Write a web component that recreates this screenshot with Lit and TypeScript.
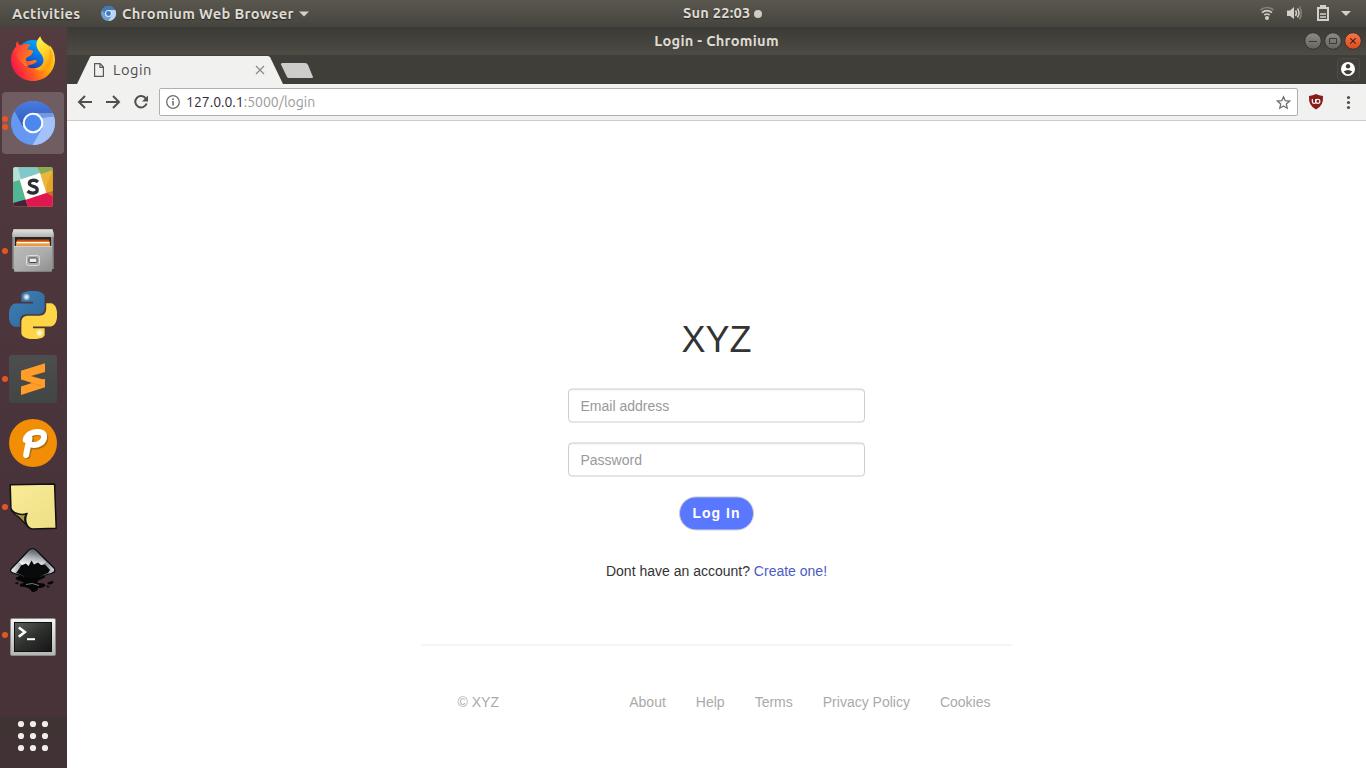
import { LitElement, html, svg, css } from "lit";
import { customElement, property } from "lit/decorators.js";

const PY =
  "M14.25.18l.9.2.73.26.59.3.45.32.34.34.25.34.16.33.1.3.04.26.02.2-.01.13V8.5l-.05.63-.13.55-.21.46-.26.38-.3.31-.33.25-.35.19-.35.14-.33.1-.3.07-.26.04-.21.02H8.77l-.69.05-.59.14-.5.22-.41.27-.33.32-.27.35-.2.36-.15.37-.1.35-.07.32-.04.27-.02.21v3.06H3.17l-.21-.03-.28-.07-.32-.12-.35-.18-.36-.26-.36-.36-.35-.46-.32-.59-.28-.73-.21-.88-.14-1.05-.05-1.23.06-1.22.16-1.04.24-.87.32-.71.36-.57.4-.44.42-.33.42-.24.4-.16.36-.1.32-.05.24-.01h.16l.06.01h8.16v-.83H6.18l-.01-2.75-.02-.37.05-.34.11-.31.17-.28.25-.26.31-.23.38-.2.44-.18.51-.15.58-.12.64-.1.71-.06.77-.04.84-.02 1.27.05z";

const firefox = svg`
  <defs>
    <linearGradient id="fb" x1=".75" y1="0" x2=".3" y2="1"><stop offset="0" stop-color="#00b0ff"/><stop offset=".5" stop-color="#0a6fe0"/><stop offset="1" stop-color="#2b1f86"/></linearGradient>
    <linearGradient id="fo" x1="1" y1=".25" x2="0" y2=".65"><stop offset="0" stop-color="#ffd72a"/><stop offset=".3" stop-color="#ffa50a"/><stop offset=".62" stop-color="#ff5a22"/><stop offset="1" stop-color="#f8104e"/></linearGradient>
    <linearGradient id="fy" x1=".2" y1="0" x2=".6" y2="1"><stop offset="0" stop-color="#fff64e"/><stop offset=".5" stop-color="#ffd52b"/><stop offset="1" stop-color="#ff9a0a"/></linearGradient>
    <linearGradient id="fp" x1="0" y1="0" x2="1" y2=".6"><stop offset="0" stop-color="#ff2f40"/><stop offset="1" stop-color="#ff8a16"/></linearGradient>
  </defs>
  <circle cx="24" cy="21.500" r="16.500" fill="url(#fb)"/>
  <path fill="url(#fo)" d="M8.300 6.300C6.800 8.500 7 10.500 7.100 11.500C3.500 15 2 20 2 25C2.400 37 12 46 24 46C36.500 46 45.500 36.500 46 25C46 18 43.500 13 40.500 10C42 15 41 21 37 24.500C36 29.500 31 33.300 25 33.300C20 33.300 16.500 31.500 14.500 29C17 30.500 21 30.500 24 29C27 27.500 28.500 26.500 27.500 25.500C24.500 24 22 26.500 19.500 26.300C16 26 16.500 23 18.500 22C20.500 21 22.500 20.500 22.500 19C22.500 17.500 18.500 18 18 15.500C17.800 13.500 19.500 11.500 21.500 10C17 9 13.500 10.500 12 10.800C9.500 10 8.500 8 8.300 6.300Z"/>
  <path fill="url(#fp)" d="M8.300 6.300C9 9 10 10.300 12 10.500C15 8.500 18.500 8.800 21.500 10.100C19 11.500 18 13.500 18.300 14.800C21 14.500 24 15.300 24.200 16.300C23.500 19.500 19.500 20.500 18.300 22C15 24 16 30 20 31C17 32.500 15 30.500 14.500 29C8 25 6 17 7.100 11.500Z"/>
  <path fill="url(#fy)" d="M31.300 1.200C27.500 5 26.700 9 28.200 13C29.500 17 34 19.500 34.500 25C34.600 29.500 30.500 33 25.500 33.500C32 38 41 33 43 27C45.500 20 43.500 14 39.500 10.500C36.500 8 32.500 6.500 31.300 1.200Z"/>
  <path fill="none" stroke="#ff9d12" stroke-width="2" opacity=".55" d="M41 15C43 25 39 34 30 37"/>`;

const chromium = svg`
  <defs><linearGradient id="cg" x1="0" y1="0" x2="0" y2="1"><stop offset="0" stop-color="#4a7be0"/><stop offset="1" stop-color="#2d5bbf"/></linearGradient></defs>
  <circle cx="24" cy="24" r="22" fill="#6598f2"/>
  <path fill="url(#cg)" d="M5.500 12A22 22 0 0 1 42.500 12.300L43.600 14H24L13.500 27Z"/>
  <path fill="#a3c2fa" d="M24 14H43.600A22 22 0 0 1 23.500 46L33.500 29Z"/>
  <path fill="#7398dc" d="M29 14H43.600L44.800 17.500L33 19Z"/>
  <circle cx="24" cy="24" r="10.300" fill="#fff"/><circle cx="24" cy="24" r="8.300" fill="#4a88f0"/>`;

const slack = svg`
  <clipPath id="sc"><rect x="4.300" y="4.300" width="39.400" height="39.200" rx="1.500"/></clipPath>
  <g clip-path="url(#sc)">
    <rect x="4" y="4" width="40" height="40" fill="#ecb53c"/>
    <path fill="#7fc9c8" d="M4 4H28L31 10L11 17L4 19Z"/>
    <path fill="#86ad56" d="M28 4H44V7L32 11Z"/>
    <path fill="#b5e0d8" d="M4 4H9L12 16.500L4 19Z"/>
    <path fill="#50b795" d="M4 19L11 17L16.500 37L4 41Z"/>
    <path fill="#45203f" d="M4 40L16.500 36.500L19 44H4Z"/>
    <path fill="#df1650" d="M16.500 36.500L37 29.500L44 28V44H19Z"/>
    <path fill="#cf6a31" d="M37 29.500L44 28V34Z"/>
    <path fill="#e4a626" d="M38 21L44 7V28L37 30Z"/>
    <path fill="#fff" d="M10.700 16.700L31 10L37.300 30L16.800 36.700Z"/>
    <path fill="none" stroke="#2b2f33" stroke-width="3.300" d="M29 19C26 16.300 20.300 16.800 20.400 20.500C20.600 24.300 28.200 22.500 28.200 26.700C28.200 31 21.500 30.800 18.600 28"/>
  </g>`;

const files = svg`
  <defs><linearGradient id="ff" x1="0" y1="0" x2="1" y2="1"><stop offset="0" stop-color="#bababa"/><stop offset=".5" stop-color="#adadad"/><stop offset="1" stop-color="#8e8e8e"/></linearGradient><linearGradient id="ft" x1="0" y1="0" x2="0" y2="1"><stop offset="0" stop-color="#e4e4e4"/><stop offset="1" stop-color="#b2b2b2"/></linearGradient></defs>
  <path fill="#8f8f8f" d="M4.500 2.500H43.500L44.700 7V42H3.300V7Z"/>
  <path fill="url(#ft)" d="M4.500 2.200H43.500L44.700 6.500V10H3.300V6.500Z"/>
  <rect x="6" y="10" width="36" height="9.500" fill="#262626"/>
  <path fill="#c44d16" d="M8 12.500H40V20H7Z"/><path fill="#ef9a3f" d="M7 14.500H41V20H7Z"/><path fill="#fff" d="M8 15H40V16.300H8Z"/>
  <rect x="5" y="19.300" width="38" height="25.500" rx="1" fill="url(#ff)"/><path stroke="#d0d0d0" d="M5 19.500H43"/>
  <rect x="17.500" y="28.500" width="13" height="10" rx="2" fill="#adadad" stroke="#ddd"/>
  <rect x="20" y="31" width="8" height="4.500" rx="1" fill="#eee" stroke="#444"/>`;

const python = svg`
  <defs><linearGradient id="pb" x1="0" y1="0" x2="1" y2="1"><stop offset="0" stop-color="#3d80b8"/><stop offset="1" stop-color="#2f6797"/></linearGradient><radialGradient id="gl"><stop offset="0" stop-color="#fff"/><stop offset=".35" stop-color="#fff" stop-opacity=".75"/><stop offset="1" stop-color="#fff" stop-opacity="0"/></radialGradient></defs>
  <path transform="scale(2)" fill="url(#pb)" d=${PY}/>
  <path transform="rotate(180 24 24) scale(2)" fill="#fed645" d=${PY}/>
  <circle cx="17.500" cy="6" r="4" fill="url(#gl)"/><circle cx="30.500" cy="42" r="4" fill="url(#gl)"/>`;

const sublime = svg`
  <defs><linearGradient id="su" x1="0" y1="0" x2="0" y2="1"><stop offset="0" stop-color="#4d4d4d"/><stop offset="1" stop-color="#424645"/></linearGradient></defs>
  <rect width="48" height="48" rx="3" fill="url(#su)"/>
  <path fill="#ff9d28" d="M12 31.500L36 23.800V32.300L12 40Z"/>
  <path fill="#e98a17" d="M16 25.500L36 24V30L31 31Z"/>
  <path fill="#ff9d28" d="M12 15.800L36 8.200V17L22 21L36 25V31.500L12 24.500Z"/>`;

const pinta = svg`
  <circle cx="24" cy="24" r="24" fill="#f28e05"/>
  <g fill="none" stroke-linecap="round" stroke-linejoin="round">
    <path stroke="#7c5a1a" stroke-width="6" opacity=".6" d="M18 22.500C18.500 16 26 13 32 14.500C39 17 37 24.500 29.500 27C26 28 23.500 27.500 22 26.500M22 21C20.500 28 19 34 18.500 37"/>
    <path stroke="#fff" stroke-width="6" d="M16.700 21C17.500 15 25 12 31 13.200C37.500 15 36 22.500 29 25.300C25.500 26.300 22.500 26 21 25M20.500 19.500C19 27 17.700 32 17.200 36"/>
  </g>`;

const note = svg`
  <defs><linearGradient id="nt" x1="0" y1="0" x2="1" y2="1"><stop offset="0" stop-color="#fbeb98"/><stop offset="1" stop-color="#ecdf86"/></linearGradient></defs>
  <path fill="#a8963f" stroke="#151515" stroke-width="1.300" stroke-linejoin="round" d="M2.500 26.500Q3 30 9 33.500L20.500 45Q13 38 17 31Z"/>
  <path fill="url(#nt)" stroke="#111" stroke-width="1.500" stroke-linejoin="round" d="M1.200 1.700L45.600 1L47.200 45.300L23.500 46C17 45 15 36 18 30.500C12 33 3 30 1.900 25Z"/>`;

const inkscape = svg`
  <defs>
    <linearGradient id="ik" x1="0" y1="0" x2="1" y2="0"><stop offset="0" stop-color="#f4f5f7"/><stop offset=".3" stop-color="#8d9298"/><stop offset=".7" stop-color="#6d737b"/><stop offset="1" stop-color="#d4d9e2"/></linearGradient>
    <linearGradient id="is" x1=".7" y1="0" x2=".4" y2="1"><stop offset="0" stop-color="#50565c"/><stop offset=".45" stop-color="#a5abb1"/><stop offset="1" stop-color="#fff"/></linearGradient>
  </defs>
  <path fill="#060606" d="M13 28L35 28Q38 30 33 32Q27 34 29 36Q38 36 36 39Q34 41 29 41Q29 45 23 45Q21 41 16 40Q8 40 12 36.500Q18 36 11 34Q4 32 8 30Z"/>
  <path fill="url(#ik)" stroke="#0c0c0c" stroke-width="1.200" stroke-linejoin="round" d="M19.500 3.500Q23.500 -.3 27.500 3.500L45 21Q47.500 25 42 26.500Q35 28 32 30H14Q12 28 6 26.700Q-.5 25 2.500 21.500Z"/>
  <path fill="url(#is)" d="M20 4.500Q23.500 1.500 27 4.500L37 15L33 19H14L10 15Z"/>
  <path fill="#090a0b" d="M12 18.500L17 16.500L19.500 19L22.500 13.500L25 17.500L29 15.500L32 18L36 17.500L41 23L39 26Q34 27.500 31 30H15Q13 27.500 7 26L10 22Z"/>
  <path fill="none" stroke="#8f959b" stroke-width=".8" d="M17 37.500Q23 35 30 38.500"/>
  <path fill="#090909" d="M38 36Q41 33.500 45 34.500Q44 37.500 40 37.500ZM37 38.500L41 39L39 41ZM5 36L9.500 35L9 37.500Z"/>`;

const terminal = svg`
  <defs><linearGradient id="te" x1="0" y1="0" x2="1" y2="1"><stop offset="0" stop-color="#5a5f5b"/><stop offset=".5" stop-color="#2e302e"/><stop offset="1" stop-color="#151615"/></linearGradient><linearGradient id="tf" x1="0" y1="0" x2="0" y2="1"><stop offset="0" stop-color="#f5f5f5"/><stop offset="1" stop-color="#b4b4b4"/></linearGradient></defs>
  <rect x="1.500" y="7.500" width="45" height="37" rx="1.500" fill="url(#tf)" stroke="#8b8b86"/>
  <rect x="5" y="11" width="38" height="30" fill="#111"/><rect x="6" y="12" width="36" height="28" fill="url(#te)"/>
  <path fill="none" stroke="#fff" stroke-width="2.600" d="M9.800 16.500L15.800 21L9.800 25.800"/><path stroke="#fff" stroke-width="2" d="M18 28.200H26"/>`;

const DOCK = [
  { art: firefox, dots: 0 },
  { art: chromium, dots: 2, active: true },
  { art: slack, dots: 0 },
  { art: files, dots: 1 },
  { art: python, dots: 0 },
  { art: sublime, dots: 1 },
  { art: pinta, dots: 0 },
  { art: note, dots: 1 },
  { art: inkscape, dots: 0 },
  { art: terminal, dots: 1 },
];

@customElement("dock-item")
class DockItem extends LitElement {
  @property({ attribute: false }) art: unknown;
  @property({ type: Number }) dots = 0;
  @property({ type: Boolean }) active = false;
  static styles = css`
    :host { display: block; height: 64px; padding: 1px 3px 1px 2px; box-sizing: border-box; }
    .cell { height: 62px; width: 62px; border-radius: 4px; display: flex; align-items: center; box-sizing: border-box; }
    .on { background: #705d62; }
    .marks { width: 6px; margin-right: 1px; display: flex; flex-direction: column; gap: 2px; }
    .dot { width: 6px; height: 6px; border-radius: 3px; background: #e95420; }
    svg { display: block; }
  `;
  render() {
    return html`<div class="cell ${this.active ? "on" : ""}">
      <div class="marks">${Array.from({ length: this.dots }, () => html`<i class="dot"></i>`)}</div>
      <svg width="48" height="48" viewBox="0 0 48 48">${this.art}</svg>
    </div>`;
  }
}

@customElement("login-page")
class LoginPage extends LitElement {
  static styles = css`
    :host { flex: 1; display: flex; flex-direction: column; align-items: center; background: #fff; color: #333;
      font: 14px/20px "Liberation Sans", Arial, sans-serif; min-height: 0; }
    h1 { margin: 199px 0 0; font-size: 36px; line-height: 40px; font-weight: 400; }
    form { display: flex; flex-direction: column; align-items: center; margin-top: 28px; }
    input { box-sizing: border-box; width: 297px; height: 34px; margin: 0 0 20px; padding: 6px 12px 6px 11.500px; border: 1px solid #ccc;
      border-radius: 4px; font: inherit; box-shadow: inset 0 1px 1px rgba(0,0,0,.075); background: #fff; transform: translateY(.5px); }
    input::placeholder { color: #999; opacity: 1; }
    button { box-sizing: border-box; width: 75px; height: 34px; border: 1px solid #ccc; border-radius: 17px; background: #5a78ff; color: #fff;
      font: bold 14px/20px "Liberation Sans", Arial, sans-serif; letter-spacing: 1px; padding: 0; white-space: nowrap; transform: translateY(.4px); }
    p { margin: 31px 0 0; }
    a { color: #4a5bc4; text-decoration: none; }
    .rule { width: 591px; height: 2px; background: #f5f5f5; margin-top: 63px; }
    footer { width: 591px; box-sizing: border-box; padding: 46px 21.500px 0 36.500px; display: flex; justify-content: space-between; color: #aaa; }
    nav { display: flex; gap: 30px; }
    nav a { color: #aaa; }
  `;
  render() {
    return html`<h1>XYZ</h1>
      <form>
        <input placeholder="Email address" /><input type="password" placeholder="Password" />
        <button type="button">Log In</button>
      </form>
      <p>Dont have an account? <a>Create one!</a></p>
      <div class="rule"></div>
      <footer><span>© XYZ</span><nav>${["About", "Help", "Terms", "Privacy Policy", "Cookies"].map((t) => html`<a>${t}</a>`)}</nav></footer>`;
  }
}

@customElement("app-root")
class AppRoot extends LitElement {
  static styles = css`
    :host { display: flex; flex-direction: column; width: 1366px; height: 768px; overflow: hidden; font-family: Ubuntu, "Noto Sans", sans-serif; }
    svg { display: block; flex: none; }
    .panel { height: 27px; flex: none; background: linear-gradient(#5a574f, #46443e); color: #dfdbd2; font-size: 14.670px; font-weight: 700;
      line-height: 27px; display: grid; grid-template-columns: 683px auto 1fr; text-shadow: 0 1px 1px rgba(0,0,0,.5); white-space: nowrap; letter-spacing: .33px; }
    .left { display: flex; align-items: center; padding-left: 12px; }
    .act { width: 68px; margin-right: 20px; }
    .app { margin-left: 5px; width: 172px; margin-right: 5px; }
    .clock { display: flex; align-items: center; gap: 4px; width: 79px; line-height: 26px; letter-spacing: .2px; }
    .clock span { width: 67px; height: 27px; }
    .bullet { width: 8px; height: 8px; border-radius: 4px; background: #d0cdc8; }
    .tray { display: flex; justify-content: flex-end; align-items: center; }
    .body { flex: 1; display: flex; min-height: 0; }
    .dock { width: 67px; flex: none; display: flex; flex-direction: column; background: linear-gradient(#533b40, #4d373c 30%, #49333b 65%, #473338 93%, #403334 93.200%, #413335); }
    .grid { margin: 50px 0 0 15px; }
    .win { flex: 1; min-width: 0; display: flex; flex-direction: column; }
    .title { height: 28px; flex: none; background: linear-gradient(#3b3a36, #4e4b44); display: grid; grid-template-columns: 1fr auto 1fr; align-items: center;
      color: #dfdbd2; font-size: 14.670px; letter-spacing: .26px; font-weight: 700; line-height: 28px; white-space: nowrap; }
    .ctl { justify-self: end; margin-right: 4px; }
    .strip { height: 29px; flex: none; background: #3f3e39; display: flex; justify-content: space-between; }
    .tabs { display: flex; padding-left: 10px; }
    .tab { width: 206px; height: 29px; clip-path: polygon(0 100%, 13px 2px, 14px 1px, 191px 1px, 193px 2px, 100% 100%); background: #f1f1f0; display: flex; align-items: center;
      box-sizing: border-box; padding: 1px 18px 0 17px; font-size: 14.670px; color: #4c4c4c; }
    .tab span { margin: 0 0 2px 9px; flex: 1; letter-spacing: .5px; }
    .newtab { margin: 8px 0 0 -2px; }
    .who { margin: 3px 5px 0 0; }
    .bar { height: 37px; box-sizing: border-box; flex: none; background: #f1f1f0; border-bottom: 1px solid #ccc; display: flex; align-items: center; padding-left: 8px; }
    .url { width: 1139px; height: 28px; box-sizing: border-box; background: #fff; border: 1px solid #b0b0b0; border-radius: 2px; display: flex; align-items: center;
      font-size: 14px; color: #302b36; padding: 0 6px 0 6px; margin-left: 8px; }
    .url span { flex: 1; margin-left: 6px; }
    .url em { font-style: normal; color: #9a9a9a; }
  `;
  render() {
    return html`
      <div class="panel">
        <div class="left">
          <span class="act">Activities</span>
          <svg width="17" height="17" viewBox="0 0 48 48"><circle cx="24" cy="24" r="21" fill="#6ea0d8"/><path fill="#4577b3" d="M5 14A21 21 0 0 1 43 14H24L14 24Z"/><path fill="#bcd4ef" d="M24 14H43A21 21 0 0 1 24 45L34 28Z"/><circle cx="24" cy="24" r="10" fill="#dcebfa"/><circle cx="24" cy="24" r="7" fill="#3c7cc4"/></svg>
          <span class="app">Chromium Web Browser</span>
          <svg width="10" height="6" viewBox="0 0 10 6"><path d="M0 .5H10L5 5.500Z" fill="#d3d0ca"/></svg>
        </div>
        <div class="clock"><span>Sun 22:03</span><i class="bullet"></i></div>
        <div class="tray">
          <svg width="106" height="27" viewBox="1260 0 106 27" fill="none">
            <g stroke-width="1.700"><path stroke="#858178" d="M1260.500 10Q1267 5 1273.500 10"/><path stroke="#d3d0ca" d="M1262 12.700Q1267 8.500 1272 12.700M1264.300 15Q1267 13 1269.700 15"/></g><circle cx="1267" cy="18" r="2" fill="#d3d0ca"/>
            <path fill="#d3d0ca" d="M1287 10.500H1290L1294 7V19L1290 16H1287Z"/><path stroke="#d3d0ca" stroke-width="1.500" d="M1295.500 10.500Q1297.500 13 1295.500 16M1297.500 8.500Q1300.500 13 1297.500 17.500"/><path stroke="#858178" stroke-width="1.500" d="M1299.500 6.500Q1303 13 1299.500 19.500"/>
            <path stroke="#d3d0ca" stroke-width="2" d="M1318 8H1328V20H1318ZM1320 6H1326"/><path stroke="#d3d0ca" stroke-width="1.500" d="M1320 14H1326M1320 17H1326"/>
            <path fill="#d3d0ca" d="M1341 11H1351L1346 16Z"/>
          </svg>
        </div>
      </div>
      <div class="body">
        <div class="dock">
          ${DOCK.map((d) => html`<dock-item .art=${d.art} .dots=${d.dots} .active=${!!d.active}></dock-item>`)}
          <svg class="grid" width="36" height="38" viewBox="0 0 36 38" fill="#f0eeec">
            ${[7, 19, 31].map((y) => [6, 18, 30].map((x) => svg`<circle cx=${x} cy=${y} r="3.100"/>`))}
          </svg>
        </div>
        <div class="win">
          <div class="title"><i></i><span>Login - Chromium</span>
            <svg class="ctl" width="58" height="20" viewBox="1304 31 58 20">
              <defs><linearGradient id="gb" x1="0" y1="0" x2="0" y2="1"><stop offset="0" stop-color="#8d8b84"/><stop offset="1" stop-color="#66645d"/></linearGradient><linearGradient id="rb" x1="0" y1="0" x2="0" y2="1"><stop offset="0" stop-color="#f5764d"/><stop offset="1" stop-color="#df4a1c"/></linearGradient></defs>
              <g stroke="#34332f"><circle cx="1313" cy="41" r="8.300" fill="url(#gb)"/><circle cx="1333" cy="41" r="8.300" fill="url(#gb)"/><circle cx="1353" cy="41" r="8.300" fill="url(#rb)"/></g>
              <path stroke="#3b3a36" fill="none" d="M1309 41.500H1317M1329.500 38.500H1336.500V43.500H1329.500Z"/><path stroke="#4a2115" stroke-width="1.200" d="M1350.300 38.300L1355.700 43.700M1355.700 38.300L1350.300 43.700"/>
            </svg>
          </div>
          <div class="strip">
            <div class="tabs">
              <div class="tab">
                <svg width="10" height="14" viewBox="0 0 10 14" fill="none" stroke="#5a5a5a" stroke-width="1.200"><path d="M.6.6H6.200L9.400 4V13.400H.6ZM6 .6V4.300H9.400"/></svg>
                <span>Login</span>
                <svg width="10" height="10" viewBox="0 0 10 10" stroke="#8c8c8c" stroke-width="1.300"><path d="M1 1L9 9M9 1L1 9"/></svg>
              </div>
              <svg class="newtab" width="33" height="15" viewBox="0 0 33 15"><path fill="#cecccb" d="M1 0H24Q26 0 27 2L32 14Q32 15 31 15H8Q6.500 15 6 14L0 1.500Q0 0 1 0Z"/></svg>
            </div>
            <svg class="who" width="24" height="24" viewBox="0 0 24 24"><rect x=".5" y=".5" width="22" height="22" rx="3" fill="#41403b" stroke="#4c4b46"/><circle cx="11" cy="11" r="7" fill="#fff"/><circle cx="11" cy="8.300" r="2.200" fill="#3f3e39"/><path fill="#3f3e39" d="M6.700 13.500Q11 10.300 15.300 13.500Q13.500 16.200 11 16.200T6.700 13.500Z"/></svg>
          </div>
          <div class="bar">
            <svg width="76" height="20" viewBox="75 92 76 20" fill="none" stroke="#505050" stroke-width="2"><path d="M92 102H79.500M85 96L79 102L85 108M106 102H118.500M113 96L119 102L113 108M146 98.700A5.800 5.800 0 1 0 146.600 103.500"/><path fill="#505050" stroke="none" d="M148 95.500V101.500H142Z"/></svg>
            <div class="url">
              <svg width="14" height="14" viewBox="0 0 14 14" fill="none" stroke="#6e6e6e"><circle cx="7" cy="7" r="6.300" stroke-width="1.300"/><path stroke-width="1.600" d="M7 6V10.500M7 3.300V5"/></svg>
              <span>127.0.0.1<em>:5000/login</em></span>
              <svg width="15" height="15" viewBox="0 0 15 15" fill="none" stroke="#6e6e6e" stroke-width="1.300"><path d="M7.500 1.800L9.200 5.700L13.500 6.100L10.300 8.900L11.200 13.200L7.500 11L3.800 13.200L4.700 8.900L1.500 6.100L5.800 5.700Z"/></svg>
            </div>
            <svg width="68" height="20" viewBox="1298 92 68 20"><path fill="#8a1c1c" d="M1309 96Q1313 95.500 1316 94Q1319 95.500 1323 96Q1323.700 106 1316 109.500Q1308.300 106 1309 96Z"/><path fill="none" stroke="#fff" stroke-width="1.200" d="M1312.300 99V101.500Q1312.500 103.500 1314.300 103.500Q1315.600 103.500 1315.800 102V99"/><circle cx="1317.800" cy="101.300" r="2.100" fill="none" stroke="#fff" stroke-width="1.100"/><g fill="#505050"><circle cx="1348.500" cy="97.500" r="1.600"/><circle cx="1348.500" cy="102.500" r="1.600"/><circle cx="1348.500" cy="107.500" r="1.600"/></g></svg>
          </div>
          <login-page></login-page>
        </div>
      </div>`;
  }
}
